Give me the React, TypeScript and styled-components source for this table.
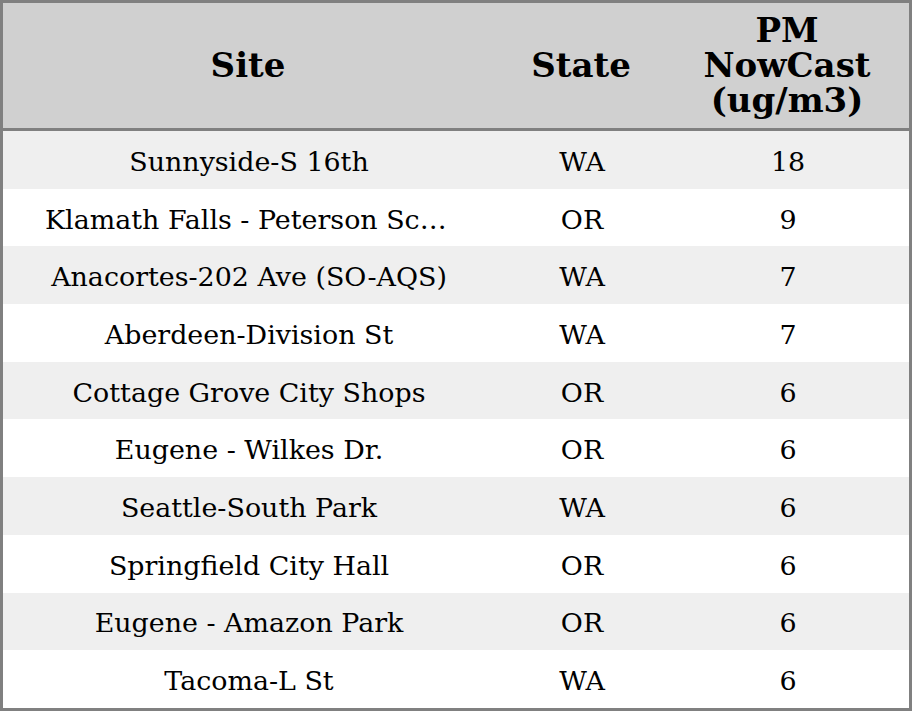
import React from 'react';
import styled, { createGlobalStyle } from 'styled-components';

const GlobalStyle = createGlobalStyle`
  html, body {
    margin: 0;
    padding: 0;
    background: #ffffff;
  }
`;

const Table = styled.table`
  width: 912px;
  height: 711px;
  border: 3px solid #808080;
  border-collapse: separate;
  border-spacing: 0;
  table-layout: fixed;
  font-family: "DejaVu Serif", serif;
  color: #000;
  box-sizing: border-box;
`;

const Col = styled.col<{ w: number }>`
  width: ${p => p.w}px;
`;

const HeadRow = styled.tr`
  height: 128px;
  background: #d0d0d0;
`;

const HeadCell = styled.th`
  box-sizing: border-box;
  font-size: 34px;
  line-height: 35px;
  font-weight: bold;
  text-align: center;
  vertical-align: middle;
  padding: 0 4px 0 0;
  border-bottom: 3px solid #808080;
`;

const Row = styled.tr<{ striped: boolean }>`
  height: 57.7px;
  background: ${p => (p.striped ? '#efefef' : '#ffffff')};
`;

const Cell = styled.td`
  font-size: 26.9px;
  text-align: center;
  vertical-align: middle;
  padding: 3px 44px 0 42px;
  white-space: nowrap;
  overflow: hidden;
  text-overflow: ellipsis;
`;

const rows = [
  { site: 'Sunnyside-S 16th', state: 'WA', pm: 18 },
  { site: 'Klamath Falls - Peterson School', state: 'OR', pm: 9 },
  { site: 'Anacortes-202 Ave (SO-AQS)', state: 'WA', pm: 7 },
  { site: 'Aberdeen-Division St', state: 'WA', pm: 7 },
  { site: 'Cottage Grove City Shops', state: 'OR', pm: 6 },
  { site: 'Eugene - Wilkes Dr.', state: 'OR', pm: 6 },
  { site: 'Seattle-South Park', state: 'WA', pm: 6 },
  { site: 'Springfield City Hall', state: 'OR', pm: 6 },
  { site: 'Eugene - Amazon Park', state: 'OR', pm: 6 },
  { site: 'Tacoma-L St', state: 'WA', pm: 6 },
];

const App: React.FC = () => {
  return (
    <>
      <GlobalStyle />
      <Table>
        <colgroup>
          <Col w={494} />
          <Col w={172} />
          <Col w={240} />
        </colgroup>
        <thead>
          <HeadRow>
            <HeadCell>Site</HeadCell>
            <HeadCell>State</HeadCell>
            <HeadCell>PM<br />NowCast<br />(ug/m3)</HeadCell>
          </HeadRow>
        </thead>
        <tbody>
          {rows.map((r, i) => (
            <Row key={r.site} striped={i % 2 === 0}>
              <Cell>{r.site}</Cell>
              <Cell>{r.state}</Cell>
              <Cell>{r.pm}</Cell>
            </Row>
          ))}
        </tbody>
      </Table>
    </>
  );
};

export default App;
